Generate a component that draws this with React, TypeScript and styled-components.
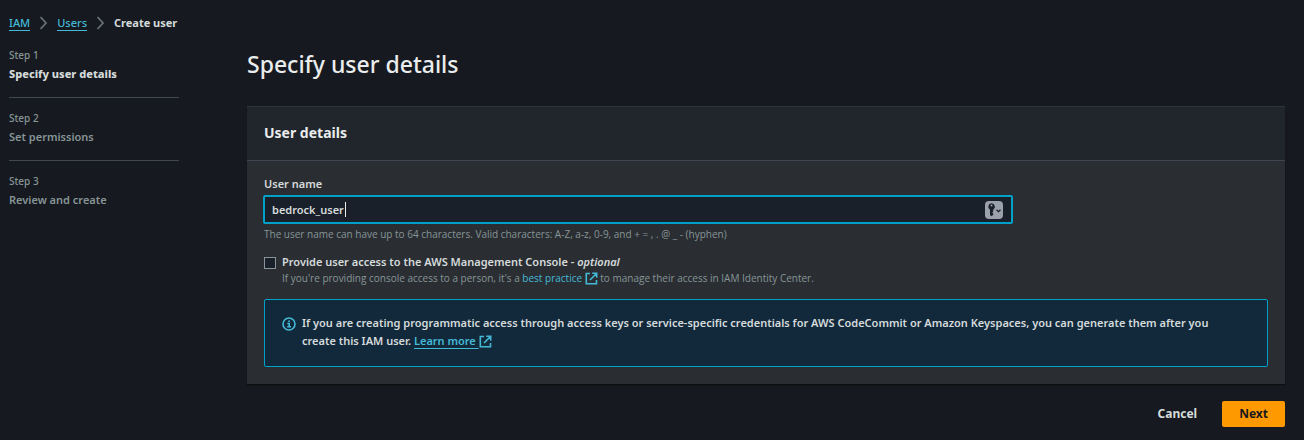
import React, { useState } from "react";
import styled, { createGlobalStyle } from "styled-components";

const GlobalStyle = createGlobalStyle`
  *, *::before, *::after { box-sizing: border-box; }
  body {
    margin: 0;
    background: #16191f;
    color: #d5dbdb;
    font-family: "Noto Sans", "Open Sans", sans-serif;
    font-size: 11px;
    font-weight: 600;
    line-height: 18px;
  }
  h1, h2, p, ol { margin: 0; padding: 0; }
  ol { list-style: none; }
  button, input { font: inherit; color: inherit; }
`;

const Page = styled.div`
  padding: 14px 19px 13px 9px;
`;

const Breadcrumbs = styled.ol`
  display: flex;
  align-items: center;
  gap: 9px;
  height: 18px;
`;

const Crumb = styled.li<{ $current?: boolean }>`
  display: flex;
  align-items: center;
  gap: 9px;
  font-weight: ${(p) => (p.$current ? 700 : 500)};
`;

const CrumbLink = styled.a`
  color: #44b9d6;
  line-height: 14px;
  text-decoration: none;
  border-bottom: 1px solid #44b9d6;
`;

const Body = styled.div`
  display: grid;
  grid-template-columns: 170px minmax(0, 1fr);
  column-gap: 68px;
  align-items: start;
`;

const Steps = styled.ol`
  padding-top: 14px;
`;

const Step = styled.li`
  padding-bottom: 14px;
  & + & {
    border-top: 1px solid #414750;
    padding-top: 11px;
  }
`;

const StepNumber = styled.div`
  color: #879596;
  font-size: 10px;
  font-weight: 500;
  line-height: 18px;
`;

const StepTitle = styled.div<{ $active?: boolean }>`
  color: ${(p) => (p.$active ? "#d5dbdb" : "#879596")};
  font-weight: ${(p) => (p.$active ? 800 : 600)};
  line-height: 19px;
`;

const Main = styled.main`
  padding-top: 16px;
`;

const Title = styled.h1`
  color: #eaeded;
  font-size: 23px;
  font-weight: 500;
  line-height: 32px;
`;

const Panel = styled.section`
  margin-top: 26px;
  background: #2a2e33;
  border-top: 1px solid #2f3338;
  box-shadow: 0 1px 1px #0c0e12;
`;

const PanelHeader = styled.header`
  padding: 14px 17px 16px;
  background: #21252c;
  border-bottom: 1px solid #414750;
`;

const PanelTitle = styled.h2`
  color: #eaeded;
  font-size: 14px;
  font-weight: 700;
  line-height: 23px;
`;

const PanelBody = styled.div`
  padding: 14px 17px 17px;
`;

const FieldLabel = styled.label`
  display: block;
`;

const InputBox = styled.div`
  display: flex;
  align-items: center;
  width: calc(75% - 3px);
  height: 29px;
  margin: 2px 0 0 -1px;
  padding: 0 8px 0 7px;
  background: #1a2029;
  border: 2px solid #00a1c9;
  border-radius: 2px;
`;

const TextInput = styled.input`
  field-sizing: content;
  max-width: 90%;
  padding: 0;
  background: transparent;
  border: 0;
  outline: 0;
`;

const Caret = styled.span`
  width: 1px;
  height: 15px;
  margin-left: 1px;
  background: #eaeded;
`;

const KeyButton = styled.button`
  display: flex;
  width: 18px;
  height: 18px;
  margin-left: auto;
  padding: 0;
  background: #9ba1aa;
  border: 0;
  border-radius: 4px;
`;

const Hint = styled.p`
  color: #879596;
  font-family: "Open Sans", "Noto Sans", sans-serif;
  font-size: 10px;
  font-weight: 500;
  line-height: 15px;
`;

const FieldHint = styled(Hint)`
  margin-top: 3px;
`;

const CheckRow = styled.div`
  display: flex;
  gap: 6px;
  margin-top: 11px;
`;

const Checkbox = styled.input`
  appearance: none;
  flex: none;
  width: 12px;
  height: 12px;
  margin: 4px 0 0;
  background: #1a2029;
  border: 1px solid #879596;
  &:checked { background: #00a1c9; }
`;

const InlineLink = styled.a<{ $underlined?: boolean }>`
  color: #44b9d6;
  text-decoration: ${(p) => (p.$underlined ? "underline" : "none")};
  text-underline-offset: 3px;
  & > svg { vertical-align: -3px; }
`;

const Info = styled.div`
  display: flex;
  gap: 6px;
  margin-top: 13px;
  padding: 14px 40px 16px 17px;
  background: #12293b;
  border: 1px solid #00a1c9;
  border-radius: 2px;
  & > svg { flex: none; margin-top: 3px; }
`;

const Actions = styled.div`
  display: flex;
  justify-content: flex-end;
  gap: 8px;
  margin-top: 17px;
`;

const Button = styled.button<{ $primary?: boolean }>`
  height: 26px;
  padding: 0 17px;
  background: ${(p) => (p.$primary ? "#ff9900" : "transparent")};
  color: ${(p) => (p.$primary ? "#16191f" : "#d5dbdb")};
  border: 0;
  border-radius: 2px;
  font-size: 12px;
  font-weight: 700;
`;

const Chevron = () => (
  <svg width="9" height="14" viewBox="0 0 9 14" fill="none" stroke="#687078" strokeWidth="1.8" aria-hidden="true">
    <path d="M1.500 1 7 7l-5.500 6" />
  </svg>
);

const ExternalIcon = () => (
  <svg width="13" height="13" viewBox="0 0 13 13" fill="none" stroke="#44b9d6" strokeWidth="1.6" aria-hidden="true">
    <path d="M5 1.500H1.300V11.700H11.500V8M7.200 1.300H11.700V5.800M11.500 1.500 5 8" />
  </svg>
);

const InfoIcon = () => (
  <svg width="14" height="14" viewBox="0 0 14 14" fill="none" stroke="#44b9d6" strokeWidth="1.6" aria-hidden="true">
    <circle cx="7" cy="7" r="6" />
    <path d="M5.300 6.500H7.200V9.700M5.200 9.800H9M6.200 4.200H7.900" />
  </svg>
);

const KeyIcon = () => (
  <svg width="18" height="18" viewBox="0 0 18 18" aria-hidden="true">
    <path
      fill="#1a2029"
      fillRule="evenodd"
      d="M6.500 2.300a3.500 3.500 0 0 1 1.700 6.500v1.700l-.9 1 .9 1v1.300L6.700 15.300 5 13.900V8.800A3.500 3.500 0 0 1 6.500 2.300Zm0 1.300a1 1 0 1 0 0 2 1 1 0 0 0 0-2Z"
    />
    <path d="M11.500 8.700l2 2 2-2" fill="none" stroke="#1a2029" strokeWidth="1.3" />
  </svg>
);

const steps = ["Specify user details", "Set permissions", "Review and create"];

export default function App() {
  const [name, setName] = useState("bedrock_user");
  return (
    <Page>
      <GlobalStyle />
      <nav aria-label="Breadcrumb">
        <Breadcrumbs>
          <Crumb><CrumbLink href="#iam">IAM</CrumbLink><Chevron /></Crumb>
          <Crumb><CrumbLink href="#users">Users</CrumbLink><Chevron /></Crumb>
          <Crumb $current aria-current="page">Create user</Crumb>
        </Breadcrumbs>
      </nav>
      <Body>
        <Steps>
          {steps.map((step, i) => (
            <Step key={step}>
              <StepNumber>Step {i + 1}</StepNumber>
              <StepTitle $active={i === 0}>{step}</StepTitle>
            </Step>
          ))}
        </Steps>
        <Main>
          <Title>Specify user details</Title>
          <Panel>
            <PanelHeader><PanelTitle>User details</PanelTitle></PanelHeader>
            <PanelBody>
              <FieldLabel htmlFor="user-name">User name</FieldLabel>
              <InputBox>
                <TextInput
                  id="user-name"
                  value={name}
                  onChange={(e) => setName(e.target.value)}
                  aria-describedby="user-name-hint"
                />
                <Caret />
                <KeyButton type="button" aria-label="Password manager"><KeyIcon /></KeyButton>
              </InputBox>
              <FieldHint id="user-name-hint">
                The user name can have up to 64 characters. Valid characters: A-Z, a-z, 0-9, and + = , . @ _ - (hyphen)
              </FieldHint>
              <CheckRow>
                <Checkbox type="checkbox" id="console-access" />
                <div>
                  <FieldLabel htmlFor="console-access">
                    Provide user access to the AWS Management Console - <em>optional</em>
                  </FieldLabel>
                  <Hint>
                    If you're providing console access to a person, it's a{" "}
                    <InlineLink href="#best-practice">best practice <ExternalIcon /></InlineLink>{" "}
                    to manage their access in IAM Identity Center.
                  </Hint>
                </div>
              </CheckRow>
              <Info>
                <InfoIcon />
                <p>
                  If you are creating programmatic access through access keys or service-specific credentials for AWS
                  CodeCommit or Amazon Keyspaces, you can generate them after you create this IAM user.{" "}
                  <InlineLink $underlined href="#learn-more">Learn more <ExternalIcon /></InlineLink>
                </p>
              </Info>
            </PanelBody>
          </Panel>
          <Actions>
            <Button type="button">Cancel</Button>
            <Button type="button" $primary>Next</Button>
          </Actions>
        </Main>
      </Body>
    </Page>
  );
}
